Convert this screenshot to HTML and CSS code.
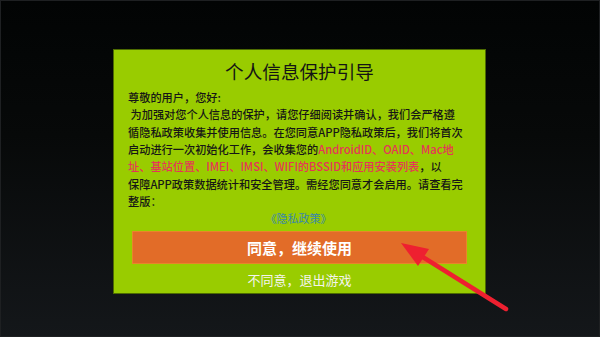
FILE: index.html
```html
<!DOCTYPE html>
<html lang="zh-CN">
<head>
<meta charset="utf-8">
<link rel="stylesheet" href="styles.css">
</head>
<body>
<div class="screen">
  <div class="dialog">
    <h1 class="title">个人信息保护引导</h1>
    <p class="body">尊敬的用户，您好:<br>
&nbsp;为加强对您个人信息的保护，请您仔细阅读并确认，我们会严格遵<br>循隐私政策收集并使用信息。在您同意APP隐私政策后，我们将首次<br>启动进行一次初始化工作，会收集您的<span class="hl">AndroidID、OAID、Mac地<br>址、基站位置、IMEI、IMSI、WIFI的BSSID和应用安装列表</span>，以<br>保障APP政策数据统计和安全管理。需经您同意才会启用。请查看完<br>整版：</p>
    <div class="link">《隐私政策》</div>
    <div class="agree">同意，继续使用</div>
    <div class="decline">不同意，退出游戏</div>
  </div>
  <svg class="arrow" width="600" height="337" viewBox="0 0 600 337">
    <line x1="506" y1="309" x2="418" y2="254" stroke="#ee2030" stroke-width="4.5" stroke-linecap="round"/>
    <polygon points="401,243 429,249 418,266" fill="#ee2030"/>
  </svg>
</div>
</body>
</html>
```
FILE: styles.css
```css
html, body {
  margin: 0;
  padding: 0;
}
body {
  width: 600px;
  height: 337px;
  overflow: hidden;
  font-family: "Noto Sans CJK SC", "Noto Sans", sans-serif;
}
.screen {
  position: relative;
  box-sizing: border-box;
  width: 600px;
  height: 337px;
  border: 1px solid #1e2022;
  background: linear-gradient(to bottom, #020404 0%, #070909 40%, #14171a 100%);
  padding-top: 48px;
}
.dialog {
  box-sizing: border-box;
  width: 373px;
  height: 245px;
  margin-left: 112px;
  background: #99cc00;
  border: 1px solid #4d6b00;
  padding: 9px 0 0 14px;
  display: flex;
  flex-direction: column;
}
.title {
  margin: 0;
  font-weight: 400;
  font-size: 18.6px;
  line-height: 24px;
  color: #141414;
  text-align: center;
  padding-right: 14px;
}
.body {
  margin: 6px 0 0 0;
  font-size: 11.2px;
  font-weight: 500;
  line-height: 17.35px;
  color: #161616;
  white-space: nowrap;
}
.hl {
  color: #e63458;
}
.link {
  margin-top: 1px;
  font-size: 11px;
  line-height: 14px;
  color: #3a88aa;
  text-align: center;
  padding-right: 16px;
}
.agree {
  box-sizing: border-box;
  margin: 6px 0 0 4px;
  width: 335px;
  height: 33px;
  background: #e26c28;
  border: 1px solid #e8862a;
  color: #ffffff;
  font-weight: 700;
  font-size: 15px;
  line-height: 31px;
  text-align: center;
}
.decline {
  margin-top: 7px;
  font-size: 13px;
  line-height: 18px;
  color: #f4f4ee;
  text-align: center;
  padding-right: 14px;
}
.arrow {
  position: absolute;
  left: -1px;
  top: -1px;
}
```
